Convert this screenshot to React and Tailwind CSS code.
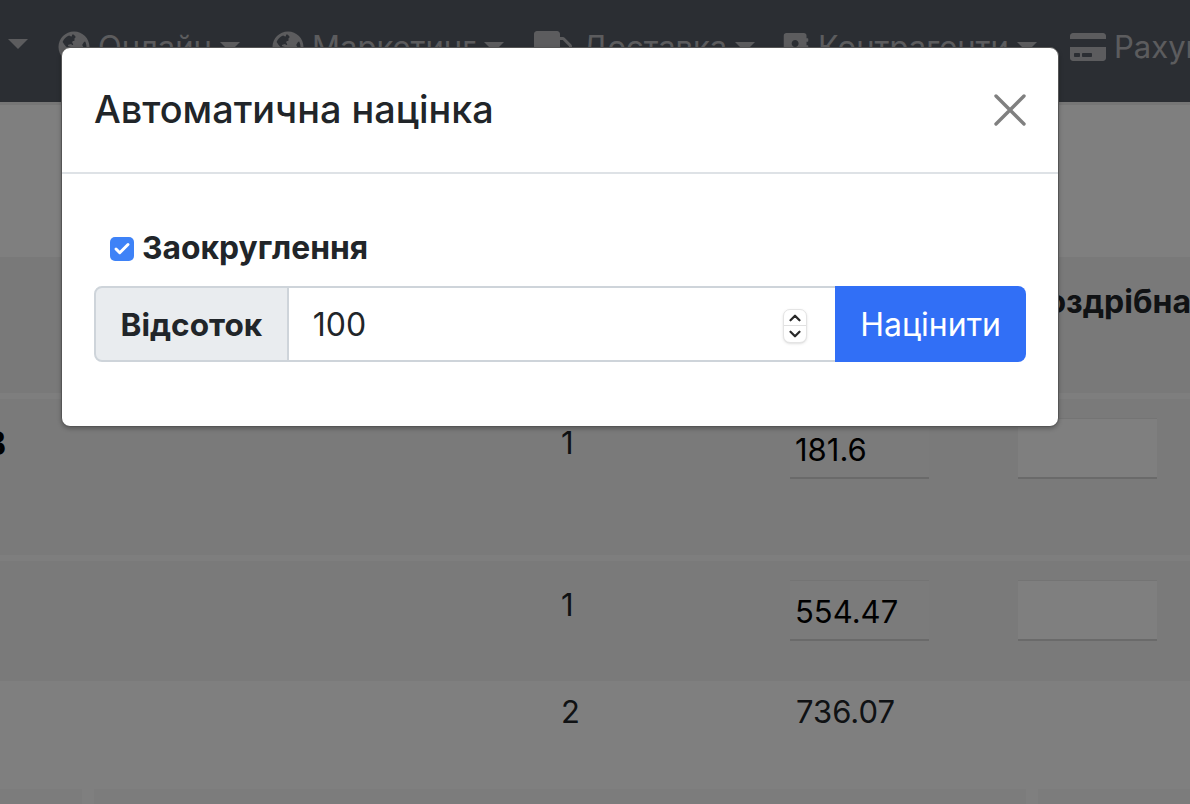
import React from "react";
import { ChevronUp, ChevronDown, Check } from "lucide-react";
import { FaGlobeAmericas, FaTruck, FaAddressBook, FaCreditCard } from "react-icons/fa";

function Caret({ className }) {
  return <span className={`inline-block w-0 h-0 border-x-[10px] border-x-transparent border-t-[10px] border-t-[#b8b9bd] shrink-0 ${className || ""}`} />;
}

function NavItem({ icon, label, width, caret = true }) {
  return (
    <div className="flex items-center shrink-0" style={{ width }}>
      {icon}
      <span className="ml-2 whitespace-nowrap">{label}</span>
      {caret && <Caret className="ml-2" />}
    </div>
  );
}

function Row({ height, bg, qty, left, price, plain, inputTop }) {
  return (
    <div className={`flex shrink-0 relative text-[31px] ${bg}`} style={{ height }}>
      <div className="w-[6px] overflow-hidden flex justify-end font-bold text-[32px] pt-[21px]">{left}</div>
      <div className="ml-[555px] w-[40px] text-[#212529]" style={{ paddingTop: plain ? 8 : 21 }}>{qty}</div>
      {plain ? (
        <div className="ml-[195px] pt-[8px] text-[#212529]">{price}</div>
      ) : (
        <div className="flex ml-[189px] gap-[89px]" style={{ paddingTop: inputTop }}>
          <div className="w-[139px] h-[61px] bg-[#f6f6f6] border-t border-[#e8e8e8] border-b-2 border-b-[#d4d4d4] pl-[5px] pt-[8px] text-black">{price}</div>
          <div className="w-[139px] h-[61px] bg-white border-t border-[#e8e8e8] border-b-2 border-b-[#d4d4d4]" />
        </div>
      )}
    </div>
  );
}

export default function App() {
  return (
    <div className="w-[1190px] h-[804px] overflow-hidden relative bg-white font-['Inter','Liberation_Sans',sans-serif] text-[32px]">
      {/* Page behind the modal */}
      <nav className="h-[105px] bg-[#575d67] border-b-[3px] border-[#ececec] text-[#b8b9bd] text-[31px] flex items-start pt-[24px] pl-[8px] overflow-hidden">
        <div className="flex items-center h-[40px] w-[50px] shrink-0"><Caret /></div>
        <NavItem icon={<FaGlobeAmericas size={32} />} label="Онлайн" width={214} />
        <NavItem icon={<FaGlobeAmericas size={32} />} label="Маркетинг" width={262} />
        <NavItem icon={<FaTruck size={40} />} label="Доставка" width={248} />
        <NavItem icon={<FaAddressBook size={28} />} label="Контрагенти" width={288} />
        <NavItem icon={<FaCreditCard size={36} />} label="Рахунки" width={200} caret={false} />
      </nav>
      <div className="h-[152px] bg-white" />
      <div className="h-[136px] bg-[#f2f2f2] flex">
        <div className="ml-[1026px] pt-[21px] font-bold text-[#212529] whitespace-nowrap">Роздрібна</div>
      </div>
      <div className="h-[6px] bg-[#fcfcfc]" />
      <Row height={156} bg="bg-[#f4f4f4]" left="В" qty="1" price="181.6" inputTop={19} />
      <div className="h-[6px] bg-[#fcfcfc]" />
      <Row height={120} bg="bg-[#f4f4f4]" qty="1" price="554.47" inputTop={19} />
      <Row height={108} bg="bg-white" qty="2" price="736.07" plain />
      <div className="h-[15px] flex gap-[12px]">
        <div className="w-[82px] bg-[#f8f8f8]" />
        <div className="w-[932px] bg-[#f8f8f8]" />
        <div className="flex-1 bg-[#f8f8f8]" />
      </div>

      {/* Backdrop */}
      <div className="absolute inset-0 bg-black/50" />

      {/* Modal */}
      <div className="absolute left-[61px] top-[47px] w-[998px] h-[380px] bg-white rounded-[9px] border border-[#555555] shadow-[0_2px_4px_rgba(0,0,0,0.25)] text-[#212529] overflow-hidden">
        <div className="h-[126px] border-b-2 border-[#dee2e6] flex items-center justify-between pl-[32px] pr-[32px]">
          <h5 className="text-[37.8px] font-medium leading-none">Автоматична націнка</h5>
          <svg width="32" height="32" viewBox="0 0 32 32" fill="none" stroke="#808080" strokeWidth="3.4" strokeLinecap="round">
            <path d="M2 2 L30 30 M30 2 L2 30" />
          </svg>
        </div>
        <div className="pl-[32px] pr-[32px] pt-[57px]">
          <label className="flex items-center pl-[16px] h-[36px]">
            <span className="w-[24px] h-[24px] rounded-[5px] bg-[#3e82f7] flex items-center justify-center shrink-0">
              <Check size={18} color="white" strokeWidth={4} />
            </span>
            <span className="ml-[8px] font-bold -mt-[2px] text-[31.8px]">Заокруглення</span>
          </label>
          <div className="flex h-[76px] mt-[19px]">
            <div className="w-[195px] bg-[#e9ecef] border-2 border-[#ced4da] rounded-l-[8px] flex items-center justify-center font-bold pt-[2px] text-[31.6px]">Відсоток</div>
            <div className="w-[547px] border-y-2 border-[#ced4da] flex items-center relative pt-[2px]">
              <input
                readOnly
                value="100"
                className="w-full pl-[24px] outline-none bg-transparent"
              />
              <div className="absolute left-[494px] top-[21px] w-[24px] h-[34px] rounded-[7px] bg-white border border-[#e4e4e4] shadow-sm flex flex-col items-center overflow-hidden">
                <div className="h-[16px] flex items-center border-b border-[#e0e0e0] w-full justify-center">
                  <ChevronUp size={18} strokeWidth={3} color="#2a2a2a" />
                </div>
                <div className="h-[16px] flex items-center justify-center">
                  <ChevronDown size={18} strokeWidth={3} color="#2a2a2a" />
                </div>
              </div>
            </div>
            <button className="w-[191px] bg-[#316ff6] text-white rounded-r-[8px] pt-[1px]">Націнити</button>
          </div>
        </div>
      </div>
    </div>
  );
}
